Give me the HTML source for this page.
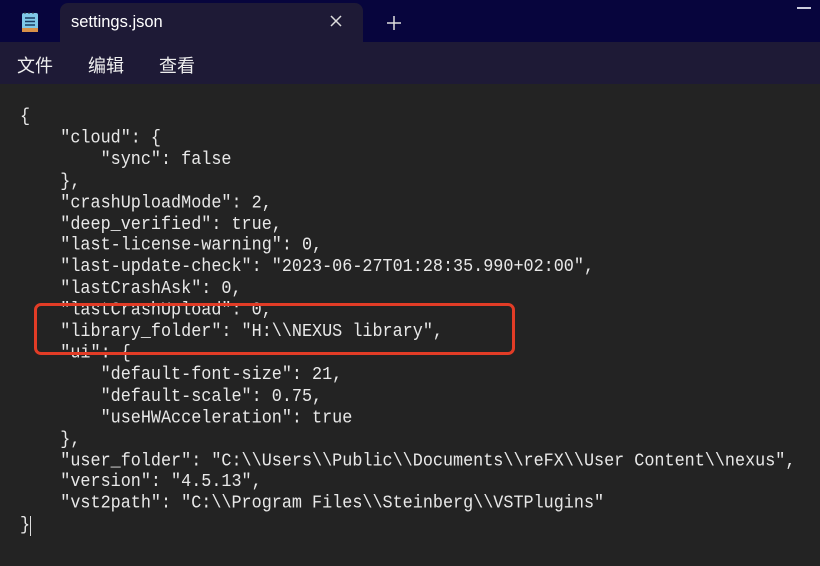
<!DOCTYPE html>
<html><head><meta charset="utf-8"><style>
*{margin:0;padding:0;box-sizing:border-box}
body{width:820px;height:566px;overflow:hidden;background:#232323;font-family:"Liberation Sans","Noto Sans CJK SC",sans-serif;position:relative}
.title{position:absolute;left:0;top:0;width:820px;height:42px;background:#07053d}
.tab{position:absolute;left:60px;top:3px;width:303px;height:45px;background:#1e1a36;border-radius:8px 8px 0 0}
.tab span{position:absolute;left:11px;top:10px;color:#fff;font-size:16.5px}
.menu{position:absolute;left:0;top:42px;width:820px;height:42px;background:#1e1a36;color:#eee;font-size:18px}
.menu span{position:absolute;top:10px}
pre{position:absolute;left:20px;top:107px;font-family:"Liberation Mono",monospace;font-size:16.8px;line-height:19.9px;color:#e8e8e8;transform:scaleY(1.08);transform-origin:0 0}
.box{position:absolute;left:34px;top:303px;width:481px;height:52px;border:3px solid #e23c26;border-radius:7px}
</style></head><body>
<div class="title"></div>
<svg style="position:absolute;left:21px;top:11px" width="18" height="22"><rect x="1" y="2" width="16" height="18" rx="2" fill="#7fc8e8"/><rect x="1" y="17" width="16" height="4" fill="#d89048"/><g stroke="#1a3a60" stroke-width="1.5"><line x1="4" y1="7" x2="14" y2="7"/><line x1="4" y1="10.5" x2="14" y2="10.5"/><line x1="4" y1="14" x2="14" y2="14"/></g><g stroke="#333" stroke-width="1"><line x1="4" y1="1" x2="4" y2="3"/><line x1="8" y1="1" x2="8" y2="3"/><line x1="12" y1="1" x2="12" y2="3"/></g></svg>
<div class="tab"><span>settings.json</span>
<svg style="position:absolute;left:270px;top:12px" width="12" height="12"><path d="M1 1L11 11M11 1L1 11" stroke="#ddd" stroke-width="1.5"/></svg></div>
<svg style="position:absolute;left:387px;top:16px" width="14" height="14"><path d="M7 0V14M0 7H14" stroke="#ddd" stroke-width="1.5"/></svg>
<div style="position:absolute;left:797px;top:7px;width:14px;height:2px;background:#ccd"></div>
<div class="menu"><span style="left:17px">文件</span><span style="left:88px">编辑</span><span style="left:159px">查看</span></div>
<pre>{
    "cloud": {
        "sync": false
    },
    "crashUploadMode": 2,
    "deep_verified": true,
    "last-license-warning": 0,
    "last-update-check": "2023-06-27T01:28:35.990+02:00",
    "lastCrashAsk": 0,
    "lastCrashUpload": 0,
    "library_folder": "H:\\NEXUS library",
    "ui": {
        "default-font-size": 21,
        "default-scale": 0.75,
        "useHWAcceleration": true
    },
    "user_folder": "C:\\Users\\Public\\Documents\\reFX\\User Content\\nexus",
    "version": "4.5.13",
    "vst2path": "C:\\Program Files\\Steinberg\\VSTPlugins"
}</pre>
<div style="position:absolute;left:30px;top:516px;width:1px;height:20px;background:#ddd"></div>
<div class="box"></div>
</body></html>
